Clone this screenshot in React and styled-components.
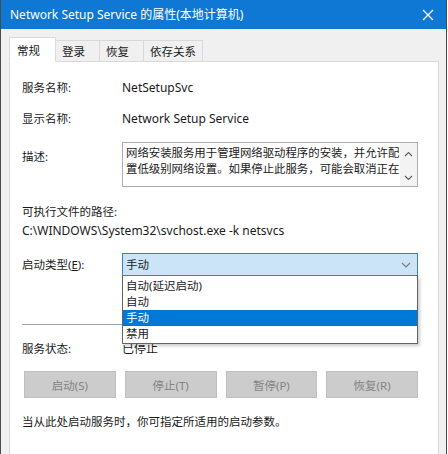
import React from "react";
import styled, { createGlobalStyle } from "styled-components";

const GlobalStyle = createGlobalStyle`
  body {
    margin: 0;
    background: #ffffff;
    font-family: "Noto Sans", "Noto Sans CJK SC", sans-serif;
  }
`;

const startTypes = ["自动(延迟启动)", "自动", "手动", "禁用"];
const actions = ["启动(S)", "停止(T)", "暂停(P)", "恢复(R)"];
const tabs = ["常规", "登录", "恢复", "依存关系"];
const descLines = [
  "网络安装服务用于管理网络驱动程序的安装，并允许配",
  "置低级别网络设置。如果停止此服务，可能会取消正在",
];

const App = () => {
  const [selected, setSelected] = React.useState("手动");

  return (
    <Window>
      <GlobalStyle />
      <TitleBar>
        <TitleText>Network Setup Service 的属性(本地计算机)</TitleText>
        <CloseButton>
          <svg width="12" height="12" viewBox="0 0 12 12">
            <path d="M1 1 L11 11 M11 1 L1 11" stroke="#fff" strokeWidth="1.3" />
          </svg>
        </CloseButton>
      </TitleBar>
      <Body>
        <TabBar>
          {tabs.map((tab, index) => (
            <Tab key={tab} active={index === 0}>
              {tab}
            </Tab>
          ))}
        </TabBar>
        <Panel>
          <Field>
            <Label>服务名称:</Label>
            <Value>NetSetupSvc</Value>
          </Field>
          <Field>
            <Label>显示名称:</Label>
            <Value>Network Setup Service</Value>
          </Field>
          <DescField>
            <DescLabel>描述:</DescLabel>
            <TextBox>
              <TextContent>
                {descLines.map((line) => (
                  <DescLine key={line}>{line}</DescLine>
                ))}
              </TextContent>
              <ScrollBar>
                <svg width="9" height="6" viewBox="0 0 9 6">
                  <path d="M1 5 L4.5 1.5 L8 5" stroke="#606060" strokeWidth="1.2" fill="none" />
                </svg>
                <svg width="9" height="6" viewBox="0 0 9 6">
                  <path d="M1 1 L4.5 4.5 L8 1" stroke="#606060" strokeWidth="1.2" fill="none" />
                </svg>
              </ScrollBar>
            </TextBox>
          </DescField>
          <PathLabel>可执行文件的路径:</PathLabel>
          <PathValue>C:\WINDOWS\System32\svchost.exe -k netsvcs</PathValue>
          <ComboField>
            <Label>
              启动类型(<u>E</u>):
            </Label>
            <ComboWrap>
              <Combo>
                <span>{selected}</span>
                <svg width="10" height="6" viewBox="0 0 10 6">
                  <path d="M1 1 L5 5 L9 1" stroke="#7a7a7a" strokeWidth="1.1" fill="none" />
                </svg>
              </Combo>
              <DropList>
                {startTypes.map((type) => (
                  <Option
                    key={type}
                    selected={type === selected}
                    onClick={() => setSelected(type)}
                  >
                    {type}
                  </Option>
                ))}
              </DropList>
            </ComboWrap>
          </ComboField>
          <Divider />
          <StatusField>
            <Label>服务状态:</Label>
            <Value>已停止</Value>
          </StatusField>
          <ButtonRow>
            {actions.map((action) => (
              <ActionButton key={action} disabled>
                {action}
              </ActionButton>
            ))}
          </ButtonRow>
          <Hint>当从此处启动服务时，你可指定所适用的启动参数。</Hint>
        </Panel>
      </Body>
    </Window>
  );
};

const Window = styled.div`
  width: 445px;
  height: 454px;
  border-left: 1px solid #4a4a4a;
  border-right: 1px solid #4a4a4a;
  background: #f0f0f0;
  overflow: hidden;
  display: flex;
  flex-direction: column;
`;

const TitleBar = styled.div`
  height: 29px;
  flex-shrink: 0;
  background: #0f78d4;
  display: flex;
  align-items: center;
  justify-content: space-between;
  padding: 0 10px 0 9px;
`;

const TitleText = styled.div`
  color: #ffffff;
  font-size: 12px;
  line-height: 16px;
  padding-top: 1px;
`;

const CloseButton = styled.div`
  width: 16px;
  height: 16px;
  display: flex;
  align-items: center;
  justify-content: center;
`;

const Body = styled.div`
  flex: 1;
  padding: 8px 7px 0 8px;
  display: flex;
  flex-direction: column;
`;

const TabBar = styled.div`
  display: flex;
  align-items: flex-end;
  height: 25px;
  margin-bottom: -1px;
  position: relative;
  z-index: 1;
`;

const Tab = styled.div`
  box-sizing: border-box;
  min-width: ${(p) => (p.active ? "47px" : "45px")};
  height: ${(p) => (p.active ? "25px" : "22px")};
  padding: 0 ${(p) => (p.active ? "7px" : "6px")};
  padding-top: ${(p) => (p.active ? "3px" : "1px")};
  margin-left: ${(p) => (p.active ? "0" : "-1px")};
  border: 1px solid #d9d9d9;
  border-bottom: ${(p) => (p.active ? "1px solid #ffffff" : "1px solid #d9d9d9")};
  background: ${(p) => (p.active ? "#ffffff" : "#f0f0f0")};
  font-size: 11.5px;
  line-height: 20px;
  color: #1a1a1a;
  z-index: ${(p) => (p.active ? 2 : 1)};
  &:first-child {
    margin-left: 0;
  }
`;

const Panel = styled.div`
  flex: 1;
  background: #ffffff;
  border: 1px solid #d9d9d9;
  border-bottom: none;
  padding: 18px 20px 0 12px;
  font-size: 11.5px;
  color: #1a1a1a;
`;

const Field = styled.div`
  display: flex;
  align-items: center;
  height: 16px;
  margin-bottom: 15px;
  line-height: 16px;
`;

const Label = styled.div`
  width: 100px;
  flex-shrink: 0;
  line-height: 16px;
`;

const Value = styled.div`
  font-size: 12px;
  line-height: 16px;
  white-space: nowrap;
`;

const DescField = styled.div`
  display: flex;
  align-items: flex-start;
`;

const DescLabel = styled(Label)`
  padding-top: 7px;
`;

const TextBox = styled.div`
  box-sizing: border-box;
  width: 296px;
  height: 45px;
  border: 1px solid #abadb3;
  display: flex;
  background: #ffffff;
`;

const TextContent = styled.div`
  flex: 1;
  padding: 2px 0 0 3px;
  overflow: hidden;
`;

const DescLine = styled.div`
  font-size: 11.4px;
  line-height: 15.5px;
  white-space: nowrap;
  color: #1a1a1a;
`;

const ScrollBar = styled.div`
  width: 17px;
  flex-shrink: 0;
  background: #f3f3f3;
  display: flex;
  flex-direction: column;
  align-items: center;
  justify-content: space-between;
  padding: 8px 0 5px;
`;

const PathLabel = styled.div`
  margin-top: 17px;
  line-height: 16px;
`;

const PathValue = styled.div`
  margin-top: 3px;
  font-size: 12px;
  line-height: 16px;
  white-space: nowrap;
`;

const ComboField = styled.div`
  display: flex;
  align-items: center;
  margin-top: 14px;
`;

const ComboWrap = styled.div`
  position: relative;
  width: 296px;
`;

const Combo = styled.div`
  box-sizing: border-box;
  height: 23px;
  border: 1px solid #2f84d0;
  background: #cce4f7;
  display: flex;
  align-items: center;
  justify-content: space-between;
  padding: 0 6px 0 3px;
  line-height: 16px;
`;

const DropList = styled.div`
  position: absolute;
  top: 23px;
  left: 0;
  right: 0;
  box-sizing: border-box;
  padding: 2px 0 1px;
  border: 1px solid #646464;
  border-top: none;
  background: #ffffff;
  box-shadow: 2px 2px 3px rgba(0, 0, 0, 0.2);
  z-index: 5;
`;

const Option = styled.div`
  height: 16px;
  line-height: 16px;
  padding-left: 3px;
  background: ${(p) => (p.selected ? "#0078d7" : "#ffffff")};
  color: ${(p) => (p.selected ? "#ffffff" : "#1a1a1a")};
`;

const Divider = styled.div`
  height: 1px;
  background: #a0a0a0;
  margin-top: 48px;
`;

const StatusField = styled(Field)`
  margin-top: 16px;
  margin-bottom: 0;
`;

const ButtonRow = styled.div`
  display: flex;
  gap: 9px;
  margin-top: 14px;
  padding-left: 2px;
`;

const ActionButton = styled.button`
  flex: 1;
  height: 27px;
  border: 1px solid #bfbfbf;
  background: #cccccc;
  color: #838383;
  font-family: "Noto Sans", "Noto Sans CJK SC", sans-serif;
  font-size: 11.5px;
  padding: 0;
`;

const Hint = styled.div`
  margin-top: 16px;
  line-height: 16px;
`;

export default App;
